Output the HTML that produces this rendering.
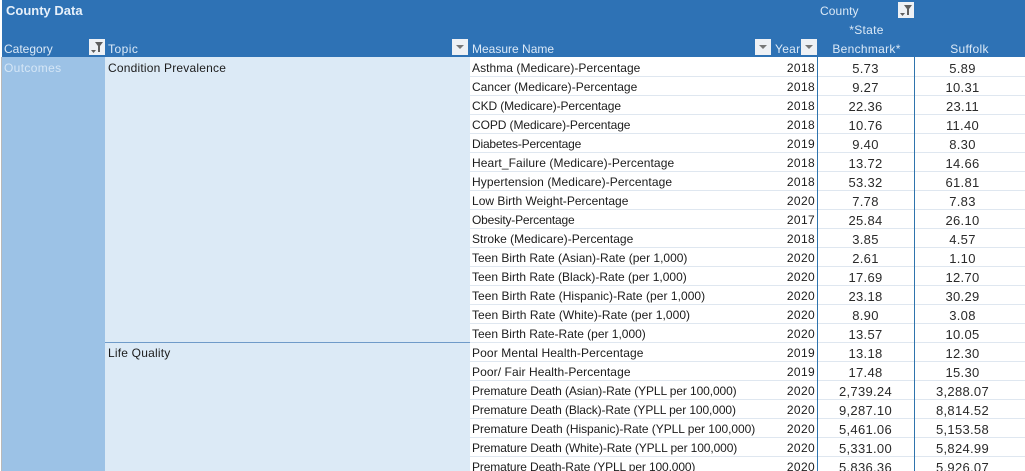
<!DOCTYPE html>
<html><head><meta charset="utf-8">
<style>
html,body{margin:0;padding:0;background:#fff}
#p{position:relative;width:1025px;height:471px;overflow:hidden;font-family:"Liberation Sans",sans-serif;font-size:12px;color:#1c1c1c}
#p div{position:absolute;white-space:nowrap}
.h{color:#dbe9f7;line-height:14px}
.r{left:470px;width:555px;height:18px;border-bottom:1px solid #dfe7f0}
.r span{position:absolute;top:3px;line-height:15px}
.m{left:2px;letter-spacing:.02px}
.y{right:210px;letter-spacing:.35px}
.a,.b{width:97px;text-align:center;font-size:13px;letter-spacing:.3px;top:3px!important;color:#2a2a2a}
.a{left:347px}
.b{left:444px}
.btn{width:16px;height:16px;background:#eef1f5}
.btn svg{display:block;width:16px;height:16px}
</style></head><body>
<div id="p">
<div style="left:2px;top:0;width:1023px;height:57px;background:#2e72b5"></div>
<div style="left:1px;top:57px;width:1px;height:414px;background:#b9b9b9"></div>
<div style="left:2px;top:57px;width:103px;height:414px;background:#9cc2e6"></div>
<div style="left:105px;top:57px;width:365px;height:414px;background:#dceaf6"></div>
<div style="left:105px;top:342px;width:365px;height:1px;background:#6f9bc9"></div>

<div style="left:6px;top:3px;color:#e6f0fa;font-weight:bold;font-size:13px;line-height:15px">County Data</div>
<div class="h" style="left:4px;top:42px">Category</div>
<div class="h" style="left:108px;top:42px;letter-spacing:.45px">Topic</div>
<div class="h" style="left:472px;top:42px">Measure Name</div>
<div class="h" style="left:775px;top:42px;letter-spacing:.3px">Year</div>
<div class="h" style="left:820px;top:4px;letter-spacing:.1px">County</div>
<div class="h" style="left:818px;top:23px;width:97px;text-align:center;letter-spacing:.3px">*State</div>
<div class="h" style="left:818px;top:42px;width:97px;text-align:center;letter-spacing:.3px">Benchmark*</div>
<div class="h" style="left:921px;top:42px;width:97px;text-align:center;letter-spacing:.3px">Suffolk</div>

<div class="btn" style="left:89px;top:39px"><svg viewBox="0 0 16 16"><path d="M6 3h8l-3 4v6H9V7z" fill="#5f5f5f"/><path d="M2 11h5l-2.500 3z" fill="#5f5f5f"/></svg></div>
<div class="btn" style="left:898px;top:2px"><svg viewBox="0 0 16 16"><path d="M6 3h8l-3 4v6H9V7z" fill="#5f5f5f"/><path d="M2 11h5l-2.500 3z" fill="#5f5f5f"/></svg></div>
<div class="btn" style="left:452px;top:39px"><svg viewBox="0 0 16 16"><path d="M4 6h8l-4 4z" fill="#777"/></svg></div>
<div class="btn" style="left:755px;top:39px"><svg viewBox="0 0 16 16"><path d="M4 6h8l-4 4z" fill="#777"/></svg></div>
<div class="btn" style="left:801px;top:39px"><svg viewBox="0 0 16 16"><path d="M4 6h8l-4 4z" fill="#777"/></svg></div>

<div style="left:4px;top:61px;color:#d5e6f6;letter-spacing:.35px;line-height:15px">Outcomes</div>
<div style="left:108px;top:61px;line-height:15px;letter-spacing:.2px">Condition Prevalence</div>
<div style="left:108px;top:346px;line-height:15px;letter-spacing:.2px">Life Quality</div>

<div class="r" style="top:58px"><span class="m" style="letter-spacing:.06px">Asthma (Medicare)-Percentage</span><span class="y">2018</span><span class="a">5.73</span><span class="b">5.89</span></div>
<div class="r" style="top:77px"><span class="m">Cancer (Medicare)-Percentage</span><span class="y">2018</span><span class="a">9.27</span><span class="b">10.31</span></div>
<div class="r" style="top:96px"><span class="m" style="letter-spacing:-.1px">CKD (Medicare)-Percentage</span><span class="y">2018</span><span class="a">22.36</span><span class="b">23.11</span></div>
<div class="r" style="top:115px"><span class="m" style="letter-spacing:-.09px">COPD (Medicare)-Percentage</span><span class="y">2018</span><span class="a">10.76</span><span class="b">11.40</span></div>
<div class="r" style="top:134px"><span class="m" style="letter-spacing:-.19px">Diabetes-Percentage</span><span class="y">2019</span><span class="a">9.40</span><span class="b">8.30</span></div>
<div class="r" style="top:153px"><span class="m" style="letter-spacing:.1px">Heart_Failure (Medicare)-Percentage</span><span class="y">2018</span><span class="a">13.72</span><span class="b">14.66</span></div>
<div class="r" style="top:172px"><span class="m" style="letter-spacing:.1px">Hypertension (Medicare)-Percentage</span><span class="y">2018</span><span class="a">53.32</span><span class="b">61.81</span></div>
<div class="r" style="top:191px"><span class="m">Low Birth Weight-Percentage</span><span class="y">2020</span><span class="a">7.78</span><span class="b">7.83</span></div>
<div class="r" style="top:210px"><span class="m" style="letter-spacing:-.2px">Obesity-Percentage</span><span class="y">2017</span><span class="a">25.84</span><span class="b">26.10</span></div>
<div class="r" style="top:229px"><span class="m">Stroke (Medicare)-Percentage</span><span class="y">2018</span><span class="a">3.85</span><span class="b">4.57</span></div>
<div class="r" style="top:248px"><span class="m" style="letter-spacing:0">Teen Birth Rate (Asian)-Rate (per 1,000)</span><span class="y">2020</span><span class="a">2.61</span><span class="b">1.10</span></div>
<div class="r" style="top:267px"><span class="m" style="letter-spacing:0">Teen Birth Rate (Black)-Rate (per 1,000)</span><span class="y">2020</span><span class="a">17.69</span><span class="b">12.70</span></div>
<div class="r" style="top:286px"><span class="m" style="letter-spacing:.04px">Teen Birth Rate (Hispanic)-Rate (per 1,000)</span><span class="y">2020</span><span class="a">23.18</span><span class="b">30.29</span></div>
<div class="r" style="top:305px"><span class="m" style="letter-spacing:.05px">Teen Birth Rate (White)-Rate (per 1,000)</span><span class="y">2020</span><span class="a">8.90</span><span class="b">3.08</span></div>
<div class="r" style="top:324px"><span class="m" style="letter-spacing:-.01px">Teen Birth Rate-Rate (per 1,000)</span><span class="y">2020</span><span class="a">13.57</span><span class="b">10.05</span></div>
<div class="r" style="top:343px"><span class="m" style="letter-spacing:.12px">Poor Mental Health-Percentage</span><span class="y">2019</span><span class="a">13.18</span><span class="b">12.30</span></div>
<div class="r" style="top:362px"><span class="m" style="letter-spacing:.09px">Poor/ Fair Health-Percentage</span><span class="y">2019</span><span class="a">17.48</span><span class="b">15.30</span></div>
<div class="r" style="top:381px"><span class="m" style="letter-spacing:-.11px">Premature Death (Asian)-Rate (YPLL per 100,000)</span><span class="y">2020</span><span class="a">2,739.24</span><span class="b">3,288.07</span></div>
<div class="r" style="top:400px"><span class="m" style="letter-spacing:-.11px">Premature Death (Black)-Rate (YPLL per 100,000)</span><span class="y">2020</span><span class="a">9,287.10</span><span class="b">8,814.52</span></div>
<div class="r" style="top:419px"><span class="m" style="letter-spacing:-.05px">Premature Death (Hispanic)-Rate (YPLL per 100,000)</span><span class="y">2020</span><span class="a">5,461.06</span><span class="b">5,153.58</span></div>
<div class="r" style="top:438px"><span class="m" style="letter-spacing:-.11px">Premature Death (White)-Rate (YPLL per 100,000)</span><span class="y">2020</span><span class="a">5,331.00</span><span class="b">5,824.99</span></div>
<div class="r" style="top:457px"><span class="m" style="letter-spacing:-.13px">Premature Death-Rate (YPLL per 100,000)</span><span class="y">2020</span><span class="a">5,836.36</span><span class="b">5,926.07</span></div>

<div style="left:817px;top:57px;width:1px;height:414px;background:#2f74ad"></div>
<div style="left:914px;top:57px;width:1px;height:414px;background:#2f74ad"></div>
</div>
</body></html>
